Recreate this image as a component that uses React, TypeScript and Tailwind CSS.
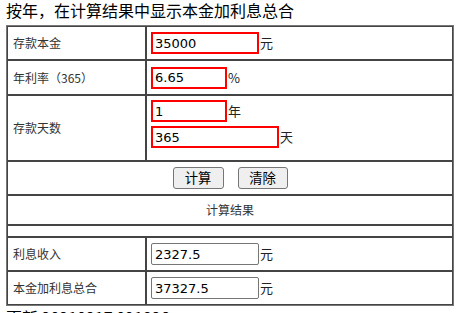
const cjk = "font-['Noto_Sans_CJK_SC',sans-serif]";
const mono = "font-['DejaVu_Sans','Noto_Sans_CJK_SC',sans-serif]";

const redInput = `h-[22px] border-2 border-[#ff0000] bg-white px-[2px] text-[13px] text-black outline-none ${mono}`;
const grayInput = `h-[22px] w-[108px] rounded-[2px] border border-[#767676] bg-white pl-[3px] text-[13px] text-black outline-none ${mono}`;
const btn = `h-[22px] rounded-[3px] border border-[#767676] bg-[#efefef] text-[13.33px] text-black ${cjk}`;

function Row({ label, height, children }: { label: string; height: string; children: React.ReactNode }) {
  return (
    <div className={`flex ${height}`}>
      <div className="flex w-[139px] items-center border border-[#444] pl-[5px] text-[12px] text-[#333]">{label}</div>
      <div className="flex flex-1 items-center border border-[#444] pl-[4px]">{children}</div>
    </div>
  );
}

function Unit({ children }: { children: React.ReactNode }) {
  return <span className="pl-[1px] text-[13px] text-[#222]">{children}</span>;
}

export default function App() {
  return (
    <div className={`h-[313px] w-[470px] overflow-hidden bg-white pl-[6px] text-black ${cjk}`}>
      <div className="h-[25px] text-[16px] leading-[20px]">按年，在计算结果中显示本金加利息总合</div>

      <div className="w-[448px] border border-[#777]">
        <Row label="存款本金" height="h-[34px]">
          <input className={`${redInput} w-[108px]`} defaultValue="35000" />
          <Unit>元</Unit>
        </Row>
        <Row label="年利率（365）" height="h-[35px]">
          <input className={`${redInput} w-[76px]`} defaultValue="6.65" />
          <Unit>%</Unit>
        </Row>
        <div className="flex h-[66px]">
          <div className="flex w-[139px] items-center border border-[#444] pl-[5px] text-[12px] text-[#333]">存款天数</div>
          <div className="flex flex-1 flex-col gap-[4px] border border-[#444] pl-[4px] pt-[4px]">
            <div className="flex items-center">
              <input className={`${redInput} w-[76px]`} defaultValue="1" />
              <Unit>年</Unit>
            </div>
            <div className="flex items-center">
              <input className={`${redInput} w-[128px]`} defaultValue="365" />
              <Unit>天</Unit>
            </div>
          </div>
        </div>
        <div className="flex h-[34px] items-center justify-center gap-[14px] border border-[#444]">
          <button className={`${btn} w-[51px]`}>计算</button>
          <button className={`${btn} w-[50px]`}>清除</button>
        </div>
        <div className="flex h-[30px] items-center justify-center border border-[#444] text-[12px] text-[#333]">计算结果</div>
        <div className="h-[12px] border border-[#444]" />
        <Row label="利息收入" height="h-[34px]">
          <input className={grayInput} defaultValue="2327.5" />
          <Unit>元</Unit>
        </Row>
        <Row label="本金加利息总合" height="h-[34px]">
          <input className={grayInput} defaultValue="37327.5" />
          <Unit>元</Unit>
        </Row>
      </div>

      <div className="pt-[1px] text-[16px] leading-[20px]">更新 20210217 091826</div>
    </div>
  );
}
